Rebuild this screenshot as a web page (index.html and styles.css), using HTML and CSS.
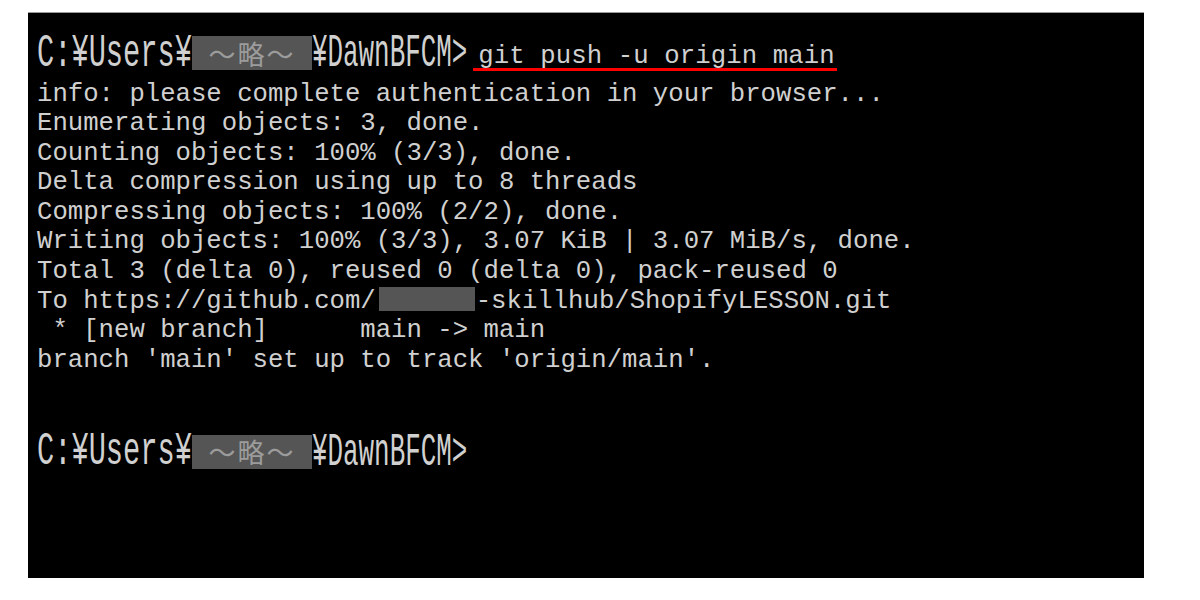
FILE: index.html
```html
<!DOCTYPE html>
<html lang="ja">
<head>
<meta charset="utf-8">
<title>git push</title>
<link rel="stylesheet" href="styles.css">
</head>
<body>
<div class="term">
  <div class="prompt">
    <span class="pbig pbig-a">C:¥Users¥</span><span class="redact">～略～</span><span class="pbig pbig-b">¥DawnBFCM&gt;</span><span class="cmd">git push -u origin main</span>
  </div>
  <div class="out">
    <div class="line">info: please complete authentication in your browser...</div>
    <div class="line">Enumerating objects: 3, done.</div>
    <div class="line">Counting objects: 100% (3/3), done.</div>
    <div class="line">Delta compression using up to 8 threads</div>
    <div class="line">Compressing objects: 100% (2/2), done.</div>
    <div class="line">Writing objects: 100% (3/3), 3.07 KiB | 3.07 MiB/s, done.</div>
    <div class="line">Total 3 (delta 0), reused 0 (delta 0), pack-reused 0</div>
    <div class="line">To https://github.com/<span class="mask"></span>-skillhub/ShopifyLESSON.git</div>
    <div class="line"> * [new branch]      main -&gt; main</div>
    <div class="line">branch 'main' set up to track 'origin/main'.</div>
    <div class="line"></div>
    <div class="line"></div>
  </div>
  <div class="prompt">
    <span class="pbig pbig-a">C:¥Users¥</span><span class="redact">～略～</span><span class="pbig pbig-b">¥DawnBFCM&gt;</span>
  </div>
</div>
</body>
</html>
```
FILE: styles.css
```css
html, body {
  margin: 0;
  padding: 0;
  background: #ffffff;
}

.term {
  box-sizing: border-box;
  margin: 12px 0 0 28px;
  width: 1116px;
  height: 566px;
  background: #000000;
  border-top: 1px solid #9a9a9a;
  padding: 23px 0 0 9px;
  color: #d0d0d0;
  font-family: "Liberation Mono", "DejaVu Sans Mono", monospace;
  font-size: 25.66px;
}

.prompt {
  display: flex;
  align-items: center;
  height: 34px;
}

.pbig {
  display: inline-block;
  line-height: 1;
  white-space: pre;
}

.pbig-a {
  font-size: 28.7px;
  transform: translateY(2px) scaleY(1.6);
}

.pbig-b {
  font-size: 25.9px;
  transform: translateY(2px) scaleY(1.76);
}

.redact {
  display: flex;
  align-items: center;
  justify-content: center;
  width: 120px;
  height: 34px;
  background: #555555;
  color: #9c9c9c;
  font-family: "Noto Sans CJK JP", sans-serif;
  font-size: 27px;
  letter-spacing: 2px;
}

.cmd {
  align-self: flex-start;
  display: inline-block;
  margin-top: 8.8px;
  margin-left: 6px;
  padding: 0 2px 0 5px;
  line-height: 23px;
  letter-spacing: 0.1px;
  white-space: pre;
  border-bottom: 3px solid #ff0000;
}

.out {
  margin-top: 9.5px;
}

.line {
  height: 29.6px;
  line-height: 29.6px;
  white-space: pre;
}

.mask {
  display: inline-block;
  vertical-align: top;
  width: 96px;
  height: 24px;
  margin: 0 1px 0 3px;
  background: #555555;
}
```
